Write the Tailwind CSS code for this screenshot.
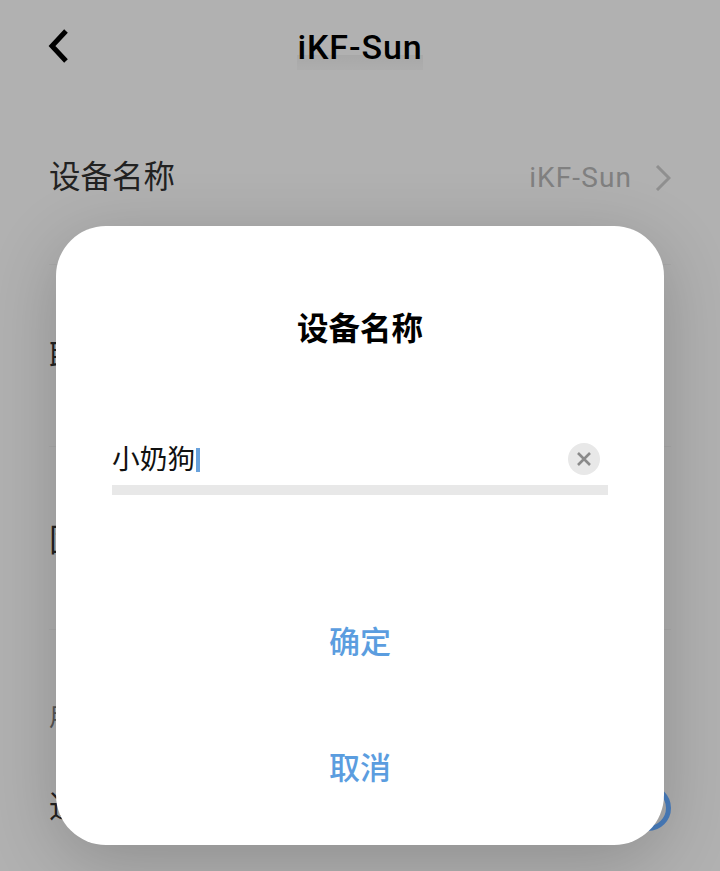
<!DOCTYPE html>
<html lang="zh-CN">
<head>
  <meta charset="UTF-8" />
  <meta name="viewport" content="width=device-width, initial-scale=1.0"/>
  <title>设备名称</title>
  <script src="https://cdn.jsdelivr.net/npm/@tailwindcss/browser@4"></script>
</head>
<body class="bg-[#b1b1b1] font-['Roboto','Noto_Sans_CJK_SC',sans-serif]">
  <div class="relative w-[720px] h-[871px] overflow-hidden">

    <!-- Page behind the dialog -->
    <header class="h-[92px] pl-[47px] flex items-center relative">
      <svg class="w-[22px] h-[34px]" viewBox="0 0 22 34" fill="none" stroke="#000" stroke-width="5">
        <path d="M19 2 L5 17 L19 32"/>
      </svg>
      <div class="absolute left-0 right-0 top-[27px] flex justify-center">
        <h1 class="relative text-[34px] leading-[40px] font-medium tracking-[0.9px] text-black">
          iKF-Sun
          <span class="absolute left-0 right-0 top-[28px] h-[15px] bg-gradient-to-b from-black/5 to-black/[0.02] -z-10"></span>
        </h1>
      </div>
    </header>

    <div class="h-[173px] mx-[49px] flex items-center justify-between border-b border-black/[0.03] text-[#222]">
      <span class="text-[31.5px]">设备名称</span>
      <span class="flex items-center gap-[23px] text-[28px] tracking-[1.1px] text-[#808080]">
        iKF-Sun
        <svg class="w-[16px] h-[26px]" viewBox="0 0 16 26" fill="none" stroke="#8f8f8f" stroke-width="3">
          <path d="M2 1 L14 13 L2 25"/>
        </svg>
      </span>
    </div>
    <div class="h-[182px] mx-[49px] pt-[4px] flex items-center border-b border-black/[0.03] text-[31.5px] text-[#222]">联系方式</div>
    <div class="h-[183px] mx-[49px] pt-[6px] flex items-center border-b border-black/[0.03] text-[31.5px] text-[#222]">固件版本</div>
    <div class="h-[174px] mx-[49px] pt-[2px] flex items-center text-[25px] text-[#555]">用户设置</div>
    <div class="h-[0px] mx-[49px] flex items-center justify-between text-[31.5px] text-[#222] translate-y-[4px]">
      <span>通知</span>
      <span class="w-[46px] h-[46px] rounded-full border-[5px] border-[#4a7fc0]"></span>
    </div>

    <!-- Dialog -->
    <div class="absolute left-[56px] top-[226px] w-[608px] h-[619px] bg-white rounded-[50px] shadow-[0_16px_70px_rgba(0,0,0,0.2)] flex flex-col">
      <h2 class="mt-[82px] h-[44px] leading-[44px] text-center text-[31.5px] font-bold text-black">设备名称</h2>
      <div class="mt-[91px] mx-[56px] h-[52px] flex items-center border-b-[10px] border-[#e8e8e8] pb-[8px] relative">
        <span class="text-[27.7px] leading-[36px] text-[#111]">小奶狗</span>
        <span class="w-[4px] h-[24px] ml-[1px] bg-[#69a2dc]"></span>
        <span class="absolute right-[8px] top-0 w-[32px] h-[32px] rounded-full bg-[#e8e8e8] flex items-center justify-center">
          <svg class="w-[16px] h-[16px]" viewBox="0 0 16 16" fill="none" stroke="#8a8a8a" stroke-width="2.6">
            <path d="M2 2 L14 14 M14 2 L2 14"/>
          </svg>
        </span>
      </div>
      <button class="mt-[126px] h-[44px] text-[31px] leading-[44px] font-medium text-[#5b9ddf]">确定</button>
      <button class="mt-[82px] h-[44px] text-[31px] leading-[44px] font-medium text-[#5b9ddf]">取消</button>
    </div>
  </div>
</body>
</html>
